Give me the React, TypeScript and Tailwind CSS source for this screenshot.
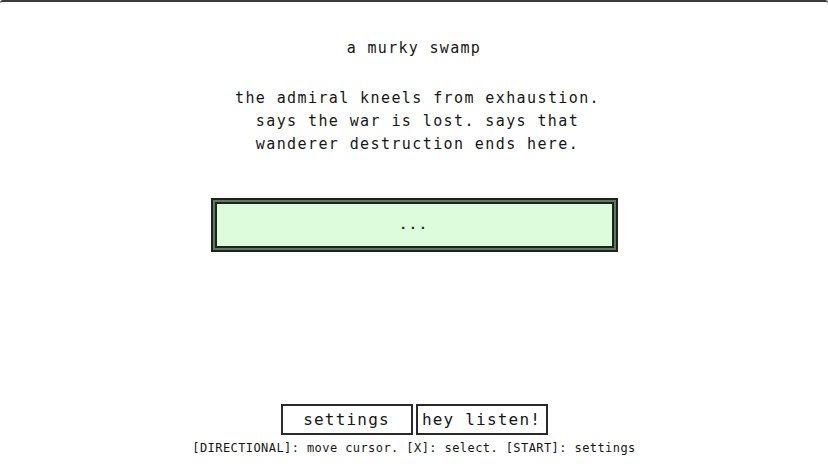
export default function App() {
  const font = { fontFamily: '"DejaVu Sans Mono", "Liberation Mono", monospace' };

  return (
    <div
      className="flex h-[466px] w-full flex-col items-center rounded-t-[3px] border-t-2 border-[#3b3b3b] bg-white text-[#161616]"
      style={font}
    >
      {/* Scene */}
      <h1 className="mt-[35px] text-[15px] leading-[23px] tracking-[1.3px]">a murky swamp</h1>

      <p className="mt-[27px] pl-[7px] text-center text-[15px] leading-[23px] tracking-[1.4px]">
        the admiral kneels from exhaustion.
        <br />
        says the war is lost. says that
        <br />
        wanderer destruction ends here.
      </p>

      {/* Dialogue box */}
      <div className="mt-[42px] w-[407px] border-2 border-[#1c241c] bg-[#5e7a5e] p-[2px]">
        <div className="flex h-[46px] items-center justify-center border-2 border-[#1c241c] bg-[#dcfcdb] text-[13px] font-bold tracking-[2px] text-[#1f2e1f]">
          ...
        </div>
      </div>

      {/* Menu */}
      <div className="mt-auto flex gap-[3px]">
        <button className="h-[31px] w-[132px] border-2 border-[#2a2a2a] bg-white text-[16px] tracking-[1.2px]">
          settings
        </button>
        <button className="h-[31px] w-[132px] border-2 border-[#2a2a2a] bg-white text-[16px] tracking-[1.2px]">
          hey listen!
        </button>
      </div>
      <div className="mb-[9px] mt-[4px] text-[12px] leading-[18px] tracking-[0.42px]">
        [DIRECTIONAL]: move cursor. [X]: select. [START]: settings
      </div>
    </div>
  );
}
